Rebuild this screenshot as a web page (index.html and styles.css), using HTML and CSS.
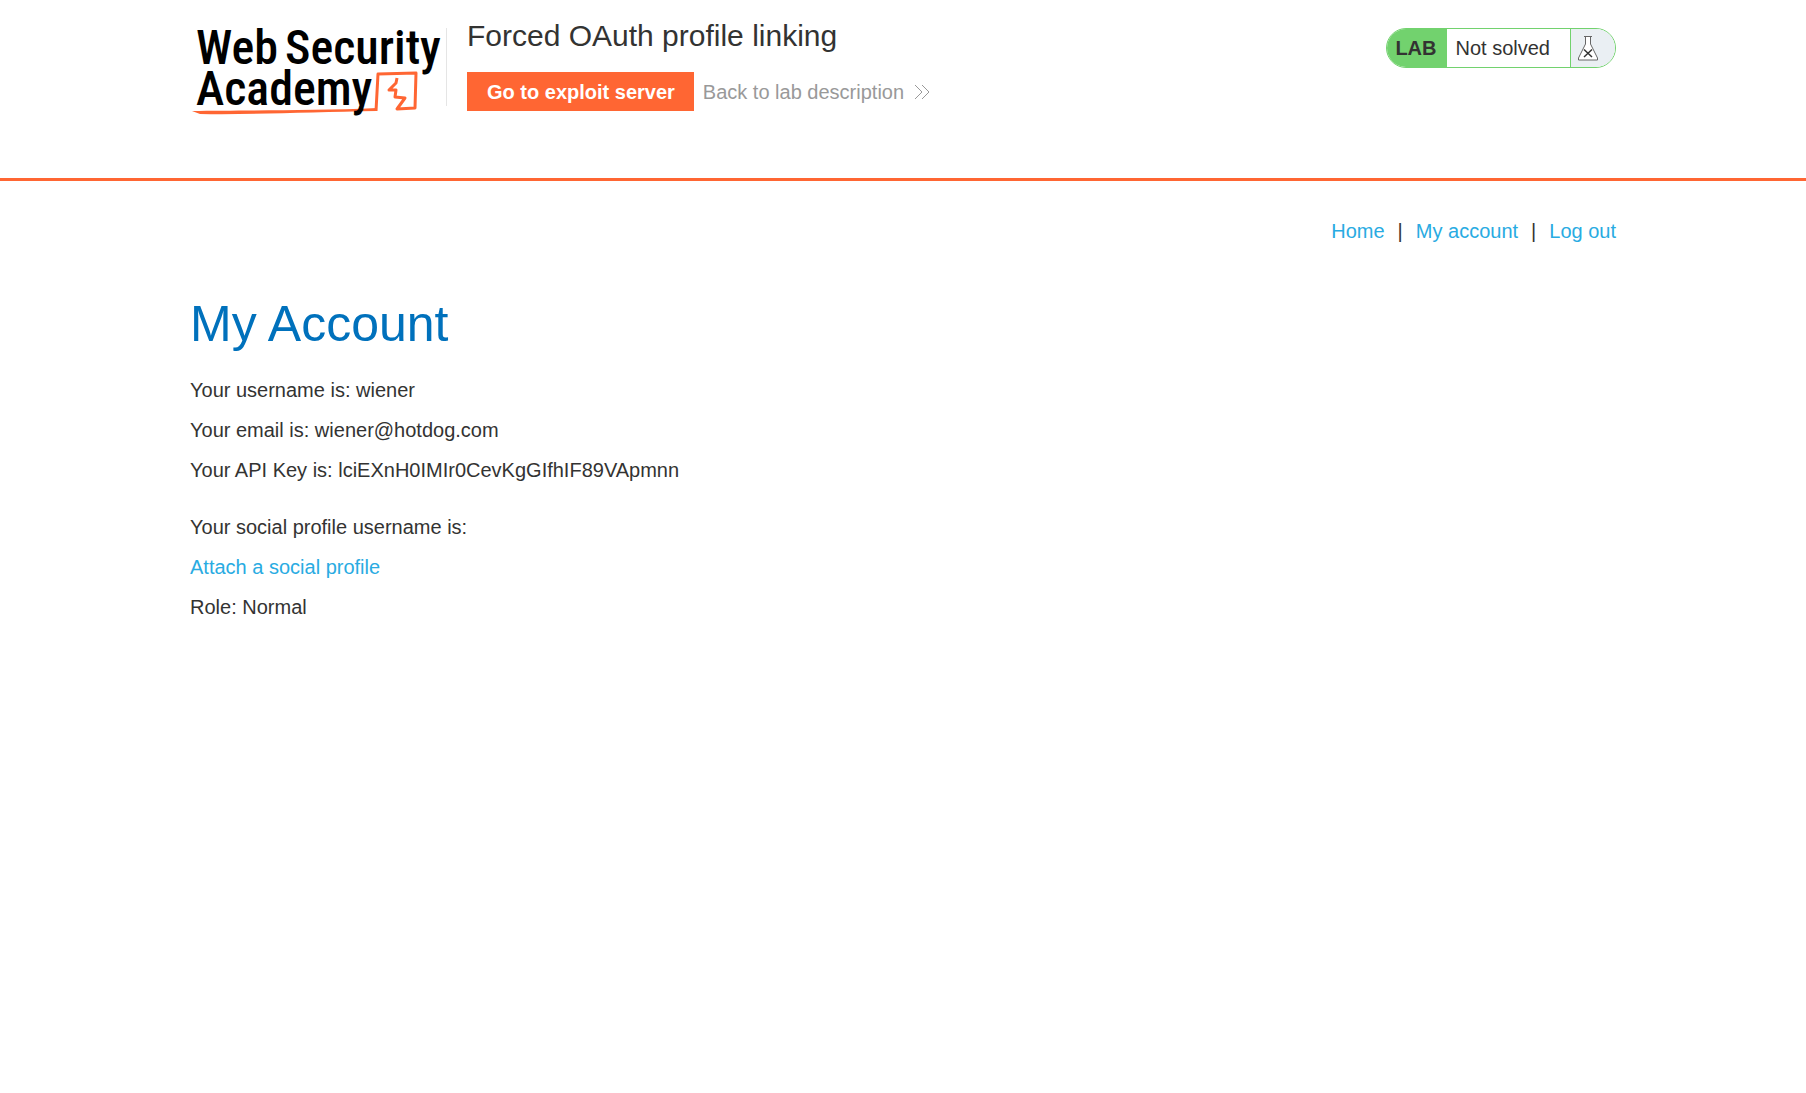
FILE: index.html
```html
<!DOCTYPE html>
<html lang="en">
<head>
    <meta charset="UTF-8">
    <meta name="viewport" content="width=device-width, initial-scale=1.0">
    <title>Forced OAuth profile linking</title>
    <link rel="stylesheet" href="styles.css">
</head>
<body>
    <!-- Lab header -->
    <header class="lab-header">
        <div class="container header-row">
            <a class="logo" href="#">
                <svg width="256" height="96" viewBox="0 0 256 96" role="img" aria-label="Web Security Academy">
                    <path class="logo-tail" d="M2 87 C50 86 120 87 187 84 V87 C120 88 60 91 10 90 Z"/>
                    <path class="logo-line" d="M186 87 L188 50 L226 49 L225 84 L207 85 L215 74 L205 73 L206 66 L199 66 L206 59 L207 54"/>
                    <g class="logo-text">
                        <text x="6" y="40">Web</text>
                        <text x="95" y="40">Security</text>
                        <text x="6" y="81">Academy</text>
                    </g>
                </svg>
            </a>
            <div class="title">
                <h2>Forced OAuth profile linking</h2>
                <div class="actions">
                    <a class="button" href="#">Go to exploit server</a>
                    <a class="back-link" href="#">
                        Back to lab description
                        <svg width="16" height="16" viewBox="0 0 16 16" aria-hidden="true">
                            <path d="M1 1 L8 8 L1 15 M8 1 L15 8 L8 15"/>
                        </svg>
                    </a>
                </div>
            </div>
            <div class="lab-status">
                <strong>LAB</strong>
                <p>Not solved</p>
                <span class="flask">
                    <svg width="20" height="26" viewBox="0 0 20 26" aria-hidden="true">
                        <path d="M6 1.5 H14 M7.5 1.5 V9 L0.5 23 V25 H19.5 V23 L12.5 9 V1.5"/>
                        <path class="cross" d="M6 14.5 L14 22 M14 14.5 L6 22"/>
                    </svg>
                </span>
            </div>
        </div>
    </header>

    <main class="container">
        <nav class="top-links">
            <a href="#">Home</a>
            <span>|</span>
            <a href="#">My account</a>
            <span>|</span>
            <a href="#">Log out</a>
        </nav>
        <h1>My Account</h1>
        <div class="details">
            <p>Your username is: wiener</p>
            <p>Your email is: wiener@hotdog.com</p>
            <p>Your API Key is: lciEXnH0IMIr0CevKgGIfhIF89VApmnn</p>
        </div>
        <div class="details">
            <p>Your social profile username is:</p>
            <p><a href="#">Attach a social profile</a></p>
            <p>Role: Normal</p>
        </div>
    </main>
</body>
</html>
```
FILE: styles.css
```css
* {
    box-sizing: border-box;
}

body {
    margin: 0;
    font-family: "Liberation Sans", Arial, sans-serif;
    font-size: 20px;
    line-height: 24px;
    color: #333332;
    background: #fff;
}

a {
    color: #29abe2;
    text-decoration: none;
}

h1, h2, p {
    margin: 0;
    font-weight: normal;
}

.container {
    width: 90%;
    max-width: 1426px;
    margin: 0 auto;
}

.lab-header {
    border-bottom: 3px solid #ff6633;
    padding-bottom: 60px;
}

.header-row {
    display: flex;
    align-items: flex-start;
}

.logo {
    margin-top: 24px;
    height: 94px;
}

.logo svg {
    display: block;
}

.logo-text {
    font-family: "Roboto Condensed", Roboto, sans-serif;
    font-size: 48px;
    font-weight: 500;
    fill: #000;
}

.logo-line {
    fill: none;
    stroke: #ff6633;
    stroke-width: 3;
    stroke-linejoin: round;
}

.logo-tail {
    fill: #ff6633;
}

.title {
    margin-top: 28px;
    height: 78px;
    padding-left: 20px;
    border-left: 1px solid #e5e5e5;
}

.title h2 {
    margin-top: -12px;
    font-size: 30px;
    line-height: 40px;
}

.actions {
    display: flex;
    align-items: center;
    gap: 9px;
    margin-top: 16px;
}

.button {
    padding: 8px 19px 7px 20px;
    font-weight: bold;
    color: #fff;
    background: #ff6633;
}

.back-link {
    display: flex;
    align-items: center;
    gap: 10px;
    color: #999;
}

.back-link svg {
    fill: none;
    stroke: #999;
}

.lab-status {
    display: flex;
    margin: 28px 0 0 auto;
    height: 40px;
    line-height: 38px;
    border: 1px solid #72d26e;
    border-radius: 20px;
    overflow: hidden;
}

.lab-status strong {
    padding: 0 10px 0 8px;
    background: #72d26e;
}

.lab-status p {
    padding: 0 20px 0 9px;
}

.flask {
    display: flex;
    align-items: center;
    width: 45px;
    padding-left: 7px;
    border-left: 1px solid #72d26e;
    background: #eaeff3;
}

.flask svg {
    fill: none;
    stroke: #666;
}

.flask path:first-child {
    fill: #fff;
}

.flask .cross {
    stroke: #333332;
    stroke-width: 1.5;
}

.top-links {
    display: flex;
    justify-content: flex-end;
    gap: 13px;
    margin-top: 38px;
}

h1 {
    margin: 51px 0 24px;
    font-size: 50px;
    line-height: 60px;
    color: #0071bc;
}

.details {
    margin-bottom: 33px;
}

.details p + p {
    margin-top: 16px;
}
```
